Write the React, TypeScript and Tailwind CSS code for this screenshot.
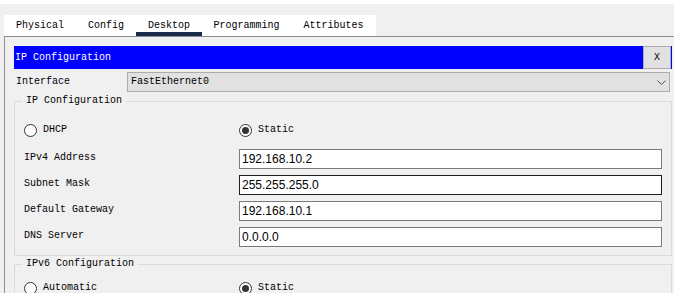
const mono = "font-['Liberation_Mono',monospace]";

const tabs = [
  { label: "Physical", w: "w-[72px]" },
  { label: "Config", w: "w-[60px]" },
  { label: "Desktop", w: "w-[66px]", active: true },
  { label: "Programming", w: "w-[89px]" },
  { label: "Attributes", w: "w-[85px]" },
];

const fields = [
  { label: "IPv4 Address", value: "192.168.10.2" },
  { label: "Subnet Mask", value: "255.255.255.0", focused: true },
  { label: "Default Gateway", value: "192.168.10.1" },
  { label: "DNS Server", value: "0.0.0.0" },
];

function Radio({ checked, label }: { checked?: boolean; label: string }) {
  return (
    <div className="flex items-center">
      <span className="w-[13px] h-[13px] rounded-full border border-[#333] bg-white flex items-center justify-center">
        {checked && <span className="w-[7px] h-[7px] rounded-full bg-[#333]" />}
      </span>
      <span className="ml-[6px] leading-[12px]">{label}</span>
    </div>
  );
}

function RadioRow({ left, right }: { left: string; right: string }) {
  return (
    <div className="grid grid-cols-[215px_423px] h-[20px] items-center">
      <Radio label={left} />
      <Radio label={right} checked />
    </div>
  );
}

export default function App() {
  return (
    <div className={`w-[674px] h-[293px] overflow-hidden bg-[#f0f0f0] text-[10px] text-black ${mono}`}>
      <div className="h-[4px] bg-white" />

      {/* tab strip */}
      <div className="mt-[11px] ml-[4px] w-[372px] h-[21px] bg-white flex">
        {tabs.map((t) => (
          <div key={t.label} className={`${t.w} h-[21px] flex flex-col items-center justify-between pt-[5px]`}>
            <span className="leading-[12px]">{t.label}</span>
            <span className={`w-full h-[4px] ${t.active ? "bg-[#172a48]" : ""}`} />
          </div>
        ))}
      </div>

      {/* desktop panel */}
      <div className="ml-[4px] h-[257px] border-l border-t border-[#8a9098] pl-[9px] pt-[9px] flex flex-col">
        <div className="w-[658px] h-[25px] bg-[#0000ff] flex items-center justify-between pl-[1px] pr-[1px]">
          <span className="text-white leading-[12px] mt-[1px]">IP Configuration</span>
          <div className="w-[28px] h-[23px] bg-[#e1e1e1] border border-[#adadad] flex items-center justify-center leading-[12px]">
            X
          </div>
        </div>

        <div className="mt-[3px] h-[20px] flex items-center">
          <span className="w-[113px] pl-[2px] leading-[12px]">Interface</span>
          <div className="w-[543px] h-[20px] border border-[#adadad] bg-[#e1e1e1] flex items-center justify-between pl-[3px] pr-[3px]">
            <span className="leading-[12px]">FastEthernet0</span>
            <svg width="9" height="5" viewBox="0 0 9 5" fill="none">
              <polyline points="0.5,0.5 4.5,4.5 8.5,0.5" stroke="#555" strokeWidth="1" />
            </svg>
          </div>
        </div>

        <fieldset className="mt-[3px] w-[658px] border border-[#dcdcdc]">
          <legend className="ml-[7px] px-[4px] leading-[12px]">IP Configuration</legend>
          <div className="mt-[13px] px-[9px] pb-[8px] flex flex-col">
            <RadioRow left="DHCP" right="Static" />
            <div className="mt-[9px] flex flex-col gap-[6px]">
              {fields.map((f) => (
                <div key={f.label} className="grid grid-cols-[215px_423px] h-[20px] items-center">
                  <span className="leading-[12px] -mt-[2px]">{f.label}</span>
                  <div
                    className={`h-[20px] border bg-white pl-[2px] flex items-center text-[12px] font-['Liberation_Sans',sans-serif] ${
                      f.focused ? "border-[#1e1e1e]" : "border-[#7a7a7a]"
                    }`}
                  >
                    {f.value}
                  </div>
                </div>
              ))}
            </div>
          </div>
        </fieldset>

        <fieldset className="mt-[2px] w-[658px] border border-[#dcdcdc]">
          <legend className="ml-[7px] px-[4px] leading-[12px]">IPv6 Configuration</legend>
          <div className="mt-[8px] px-[9px] pb-[8px]">
            <RadioRow left="Automatic" right="Static" />
          </div>
        </fieldset>
      </div>
    </div>
  );
}
